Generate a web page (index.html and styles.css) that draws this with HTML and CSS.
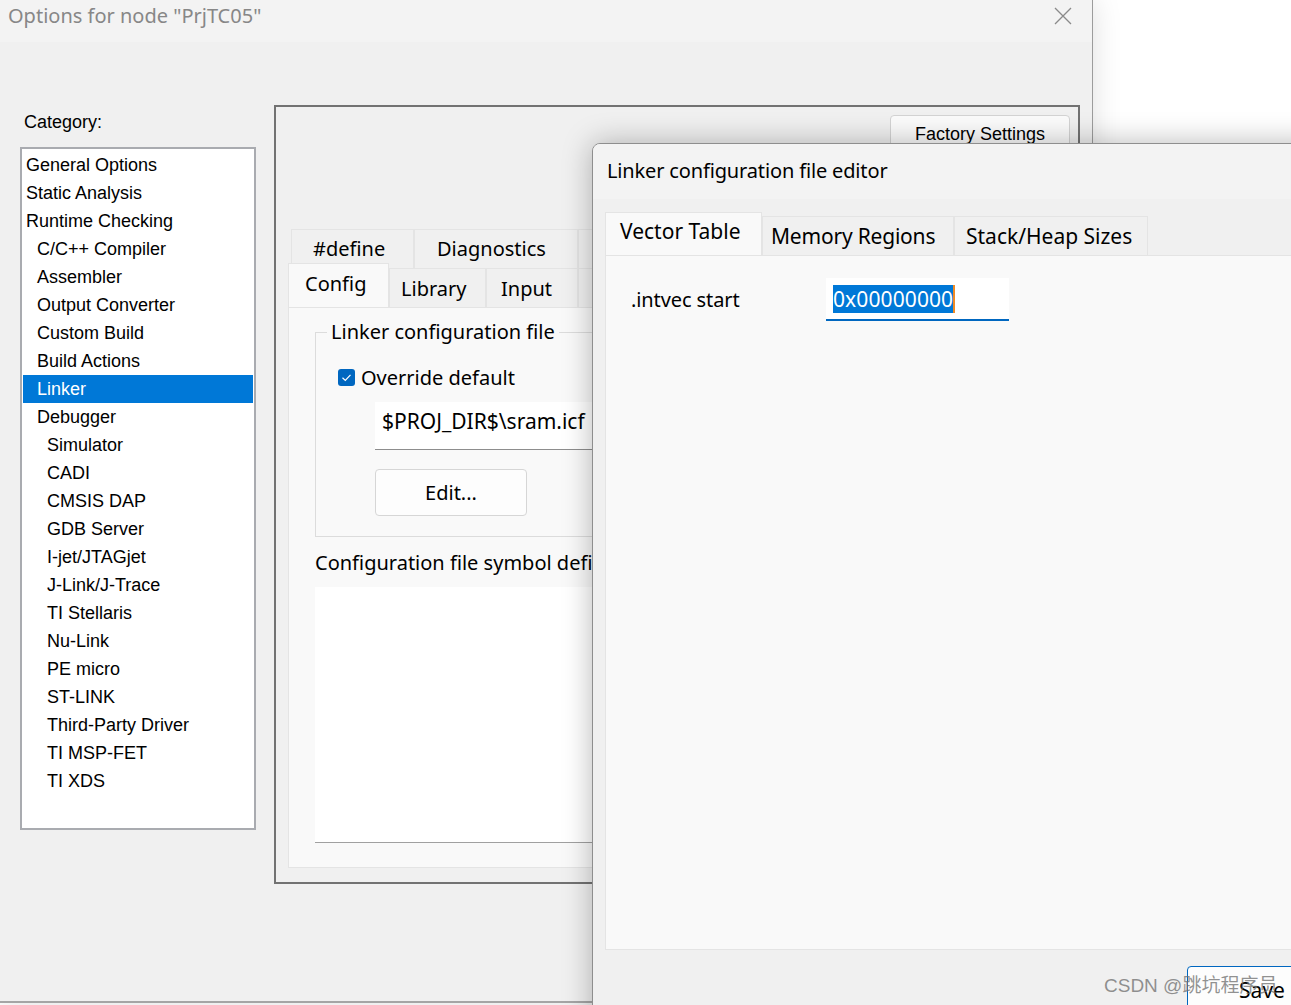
FILE: index.html
```html
<!DOCTYPE html>
<html>
<head>
<meta charset="utf-8">
<title>Options for node</title>
<link rel="stylesheet" href="styles.css">
</head>
<body>
<div class="main">
  <div class="main-title">
    <span class="main-title-text">Options for node "PrjTC05"</span>
    <svg class="close-x" width="18" height="18" viewBox="0 0 18 18"><path d="M1 1 L17 17 M17 1 L1 17" stroke="#8a8a8a" stroke-width="1.3" fill="none"/></svg>
  </div>
  <div class="main-body">
    <div class="cat-col">
      <div class="cat-label">Category:</div>
      <div class="cat-list">
        <div class="cat-item">General Options</div>
        <div class="cat-item">Static Analysis</div>
        <div class="cat-item">Runtime Checking</div>
        <div class="cat-item l1">C/C++ Compiler</div>
        <div class="cat-item l1">Assembler</div>
        <div class="cat-item l1">Output Converter</div>
        <div class="cat-item l1">Custom Build</div>
        <div class="cat-item l1">Build Actions</div>
        <div class="cat-item l1 selected">Linker</div>
        <div class="cat-item l1">Debugger</div>
        <div class="cat-item l2">Simulator</div>
        <div class="cat-item l2">CADI</div>
        <div class="cat-item l2">CMSIS DAP</div>
        <div class="cat-item l2">GDB Server</div>
        <div class="cat-item l2">I-jet/JTAGjet</div>
        <div class="cat-item l2">J-Link/J-Trace</div>
        <div class="cat-item l2">TI Stellaris</div>
        <div class="cat-item l2">Nu-Link</div>
        <div class="cat-item l2">PE micro</div>
        <div class="cat-item l2">ST-LINK</div>
        <div class="cat-item l2">Third-Party Driver</div>
        <div class="cat-item l2">TI MSP-FET</div>
        <div class="cat-item l2">TI XDS</div>
      </div>
    </div>
    <div class="group-box">
      <div class="factory-btn">Factory Settings</div>
      <div class="tabctl">
        <div class="tab-row row1">
          <div class="tab t-define">#define</div>
          <div class="tab t-diag">Diagnostics</div>
          <div class="tab t-more"></div>
        </div>
        <div class="tab-row row2">
          <div class="tab t-config active">Config</div>
          <div class="tab t-lib">Library</div>
          <div class="tab t-input">Input</div>
          <div class="tab t-more2"></div>
        </div>
        <div class="tab-pane">
          <fieldset class="groupbox">
            <legend>Linker configuration file</legend>
            <div class="check-row">
              <span class="checkbox"><svg width="17" height="17" viewBox="0 0 17 17"><path d="M4.5 8.8 L7.3 11.4 L12.5 5.8" stroke="#fff" stroke-width="1.2" fill="none"/></svg></span>
              <span>Override default</span>
            </div>
            <div class="path-input">$PROJ_DIR$\sram.icf</div>
            <div class="edit-btn">Edit...</div>
          </fieldset>
          <div class="sym-label">Configuration file symbol definitions: (one per line)</div>
          <div class="sym-box"></div>
        </div>
      </div>
    </div>
  </div>
</div>

<div class="editor">
  <div class="editor-title">Linker configuration file editor</div>
  <div class="editor-body">
    <div class="etabs">
      <div class="etab e-vec active">Vector Table</div>
      <div class="etab e-mem">Memory Regions</div>
      <div class="etab e-stack">Stack/Heap Sizes</div>
    </div>
    <div class="epane">
      <div class="field-row">
        <span class="field-label">.intvec start</span>
        <div class="field-input"><span class="sel">0x00000000</span><span class="caret"></span></div>
      </div>
    </div>
    <div class="efooter">
      <div class="save-btn">Save</div>
    </div>
  </div>
</div>

<div class="watermark">CSDN @跳坑程序员</div>
</body>
</html>
```

FILE: styles.css
```css
* { box-sizing: border-box; }

body {
  margin: 0;
  width: 1291px;
  height: 1005px;
  overflow: hidden;
  background: #ffffff;
  position: relative;
  font-family: "Noto Sans", "Open Sans", sans-serif;
  color: #000;
}

/* ---------- main options dialog ---------- */
.main {
  position: absolute;
  left: 0;
  top: 0;
  width: 1093px;
  height: 1003px;
  background: #f0f0f0;
  border-right: 1px solid #9c9c9c;
  border-bottom: 2px solid #a5a5a5;
  box-shadow: 0 0 28px rgba(0, 0, 0, 0.13);
}

.main-title {
  height: 42px;
  background: #f3f3f3;
  display: flex;
  align-items: flex-start;
  justify-content: space-between;
  padding: 1px 20px 0 8px;
}

.main-title-text {
  font-size: 20px;
  line-height: 30px;
  color: #878787;
}

.close-x {
  margin-top: 6px;
}

.main-body {
  display: flex;
  align-items: flex-start;
  padding: 63px 0 0 20px;
}

.cat-col {
  width: 236px;
  margin-right: 18px;
}

.cat-label {
  font-family: "Liberation Sans", Arial, sans-serif;
  font-size: 18px;
  line-height: 28px;
  margin-top: 3px;
  padding-left: 4px;
}

.cat-list {
  margin-top: 11px;
  height: 683px;
  background: #fff;
  border: 2px solid #a9abb0;
  padding: 2px 1px;
}

.cat-item {
  height: 28px;
  line-height: 28px;
  font-family: "Liberation Sans", Arial, sans-serif;
  font-size: 18px;
  padding-left: 3px;
  white-space: nowrap;
}

.cat-item.l1 { padding-left: 14px; }
.cat-item.l2 { padding-left: 24px; }

.cat-item.selected {
  background: #0078d7;
  color: #fff;
}

.group-box {
  width: 806px;
  height: 779px;
  border: 2px solid #727272;
  background: #f0f0f0;
  display: flex;
  flex-direction: column;
  padding: 8px 8px 0 12px;
}

.factory-btn {
  align-self: flex-end;
  width: 180px;
  height: 36px;
  border: 1px solid #d3d3d3;
  border-radius: 4px;
  background: #fbfbfb;
  font-family: "Liberation Sans", Arial, sans-serif;
  font-size: 18px;
  display: flex;
  align-items: center;
  justify-content: center;
  padding-top: 2px;
}

.tabctl {
  margin-top: 78px;
  width: 778px;
  display: flex;
  flex-direction: column;
}

.tab-row {
  display: flex;
  height: 39px;
}

.row1 { padding-left: 3px; }

.tab {
  font-size: 20px;
  background: #f0f0f0;
  border: 1px solid #e4e4e4;
  border-bottom: none;
  display: flex;
  align-items: center;
  justify-content: flex-start;
  white-space: nowrap;
  overflow: hidden;
}

.t-define { width: 123px; padding-left: 21px; padding-bottom: 2px; }
.t-diag { width: 164px; padding-left: 22px; padding-bottom: 2px; }
.t-more { width: 160px; }

.row2 { align-items: flex-end; }
.t-config {
  width: 101px;
  height: 44px;
  margin-top: -5px;
  background: #f9f9f9;
  align-self: flex-end;
  align-items: flex-start;
  padding: 6px 0 0 16px;
  position: relative;
  z-index: 1;
}
.t-lib { width: 97px; height: 39px; padding-left: 11px; }
.t-input { width: 92px; height: 39px; padding-left: 14px; }
.t-more2 { width: 180px; height: 39px; }

.tab-pane {
  height: 561px;
  background: #f9f9f9;
  border: 1px solid #e4e4e4;
  padding-left: 26px;
  padding-right: 20px;
}

.groupbox {
  margin: 10px 0 0 0;
  border: 1px solid #dcdcdc;
  padding: 17px 0 20px 22px;
  min-width: 0;
}

.groupbox legend {
  font-size: 20px;
  line-height: 28px;
  padding: 0 4px;
  margin-left: -11px;
}

.check-row {
  display: flex;
  align-items: center;
  height: 28px;
  font-size: 20px;
  gap: 6px;
}

.checkbox {
  width: 17px;
  height: 17px;
  border-radius: 3px;
  background: #0067c0;
  display: inline-block;
}
.checkbox svg { display: block; }

.path-input {
  margin-top: 11px;
  margin-left: 37px;
  height: 48px;
  background: #fff;
  border-bottom: 1px solid #8d8d8d;
  font-size: 21px;
  line-height: 28px;
  padding: 5px 0 0 7px;
  white-space: nowrap;
}

.edit-btn {
  margin-top: 19px;
  margin-left: 37px;
  width: 152px;
  height: 47px;
  background: #fdfdfd;
  border: 1px solid #d6d6d6;
  border-radius: 4px;
  font-size: 20px;
  display: flex;
  align-items: center;
  justify-content: center;
}

.sym-label {
  margin-top: 12px;
  width: 290px;
  overflow: hidden;
  font-size: 20px;
  line-height: 28px;
  white-space: nowrap;
}

.sym-box {
  margin-top: 10px;
  height: 256px;
  background: #fff;
  border-bottom: 1px solid #a0a0a0;
}

/* ---------- editor dialog ---------- */
.editor {
  position: absolute;
  left: 592px;
  top: 143px;
  width: 760px;
  height: 900px;
  background: #f0f0f0;
  border: 1px solid #8e8e8e;
  border-radius: 8px 8px 0 0;
  box-shadow: 0 0 30px rgba(0, 0, 0, 0.28);
  overflow: hidden;
}

.editor-title {
  height: 55px;
  background: #f3f3f3;
  padding-left: 14px;
  font-size: 20px;
  letter-spacing: -0.15px;
  display: flex;
  align-items: center;
  padding-bottom: 2px;
}

.editor-body {
  padding: 13px 12px 0 12px;
}

.etabs {
  display: flex;
  align-items: flex-end;
  height: 43px;
}

.etab {
  font-size: 21px;
  background: #f0f0f0;
  border: 1px solid #e4e4e4;
  border-bottom: none;
  height: 39px;
  display: flex;
  align-items: center;
  white-space: nowrap;
}

.e-vec {
  width: 157px;
  height: 43px;
  background: #f9f9f9;
  padding-left: 14px;
  align-items: flex-start;
  padding-top: 4px;
}
.e-mem { width: 192px; padding-left: 8px; letter-spacing: -0.2px; }
.e-stack { width: 194px; padding-left: 11px; }

.epane {
  height: 695px;
  background: #f9f9f9;
  border: 1px solid #e4e4e4;
  padding: 22px 0 0 25px;
}

.field-row {
  display: flex;
  align-items: center;
}

.field-label {
  width: 195px;
  font-size: 20px;
  letter-spacing: -0.1px;
}

.field-input {
  width: 183px;
  height: 43px;
  background: #fff;
  border-bottom: 2px solid #0067c0;
  display: flex;
  align-items: center;
  padding-left: 7px;
}

.sel {
  background: #0078d7;
  color: #fff;
  font-size: 21px;
  line-height: 28px;
  letter-spacing: 0.1px;
}

.caret {
  width: 2px;
  height: 28px;
  background: #f08a24;
}

.efooter {
  display: flex;
  justify-content: flex-end;
  padding: 16px 2px 0 0;
}

.save-btn {
  width: 150px;
  height: 44px;
  background: #fdfdfd;
  border: 1px solid #0067c0;
  border-radius: 4px;
  font-size: 21px;
  line-height: 28px;
  display: flex;
  align-items: flex-start;
  justify-content: center;
  padding-top: 9px;
}

.watermark {
  position: absolute;
  left: 1104px;
  top: 972px;
  font-family: "Liberation Sans", "Noto Sans CJK SC", sans-serif;
  font-size: 19px;
  line-height: 28px;
  color: rgba(110, 110, 110, 0.75);
  white-space: nowrap;
}
```
